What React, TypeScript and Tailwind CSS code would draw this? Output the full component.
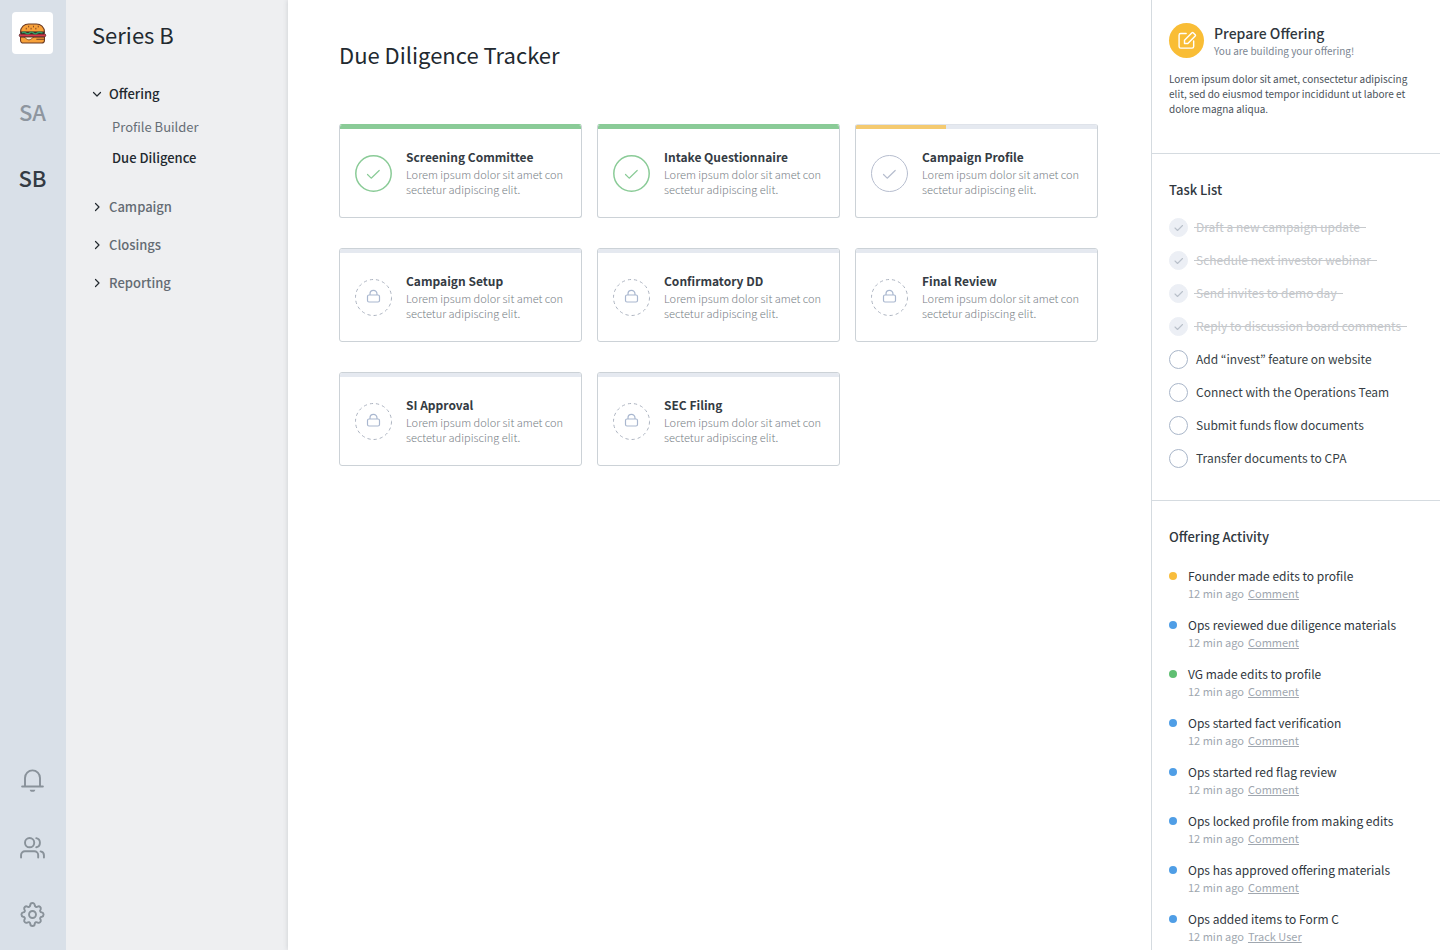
import React from "react";

type CardState = "done" | "active" | "locked";
type Card = { title: string; state: CardState };

const cards: Card[] = [
  { title: "Screening Committee", state: "done" },
  { title: "Intake Questionnaire", state: "done" },
  { title: "Campaign Profile", state: "active" },
  { title: "Campaign Setup", state: "locked" },
  { title: "Confirmatory DD", state: "locked" },
  { title: "Final Review", state: "locked" },
  { title: "SI Approval", state: "locked" },
  { title: "SEC Filing", state: "locked" },
];

const tasks = [
  { label: "Draft a new campaign update", done: true },
  { label: "Schedule next investor webinar", done: true },
  { label: "Send invites to demo day", done: true },
  { label: "Reply to discussion board comments", done: true },
  { label: "Add “invest” feature on website", done: false },
  { label: "Connect with the Operations Team", done: false },
  { label: "Submit funds flow documents", done: false },
  { label: "Transfer documents to CPA", done: false },
];

const activity = [
  { text: "Founder made edits to profile", dot: "bg-[#f8bd3c]", action: "Comment" },
  { text: "Ops reviewed due diligence materials", dot: "bg-[#4f9ee6]", action: "Comment" },
  { text: "VG made edits to profile", dot: "bg-[#5fbf72]", action: "Comment" },
  { text: "Ops started fact verification", dot: "bg-[#4f9ee6]", action: "Comment" },
  { text: "Ops started red flag review", dot: "bg-[#4f9ee6]", action: "Comment" },
  { text: "Ops locked profile from making edits", dot: "bg-[#4f9ee6]", action: "Comment" },
  { text: "Ops has approved offering materials", dot: "bg-[#4f9ee6]", action: "Comment" },
  { text: "Ops added items to Form C", dot: "bg-[#4f9ee6]", action: "Track User" },
];

function Burger() {
  return (
    <svg viewBox="0 0 30 24" className="h-[23px] w-[29px]" aria-hidden="true">
      <path d="M2.500 10.500C2.500 5 6.500 2 11 2h8c4.500 0 8.500 3 8.500 8.500z" fill="#f7a13a" stroke="#6b3a22" strokeWidth="1.100" />
      <path d="M2.500 15.500h25V19c0 1.800-1.200 3-3 3h-19c-1.800 0-3-1.200-3-3z" fill="#f7a13a" stroke="#6b3a22" strokeWidth="1.100" />
      <path d="M6 15.500h10.500c-2 1-3 3.200-5.200 3.200S8 16.500 6 15.500z" fill="#fff3cf" stroke="#6b3a22" strokeWidth=".8" />
      <path d="M19 18h8" stroke="#6b3a22" strokeWidth="1" />
      <rect x="1.200" y="12.400" width="27.600" height="3" rx="1.400" fill="#d9374a" stroke="#5b2a2a" strokeWidth=".9" />
      <rect x="2" y="10.200" width="26" height="2.600" rx="1.200" fill="#39312b" />
      <path d="M4 11.200c1.500-.8 3-.8 4 .3s3 1 4 0 3-1 4 0 3 1 4 0 3-1 5.500-.2" fill="none" stroke="#2f9e62" strokeWidth="1.500" />
      <path d="M8.500 6.500v.9M11 4.300v.9M13.500 6.500v.9M16 4.300v.9M18.500 6.500v.9M21 4.300v.9" stroke="#7a4424" strokeWidth="1" strokeLinecap="round" />
    </svg>
  );
}

function BellIcon() {
  return (
    <svg viewBox="0 0 26 26" className="size-[25px]" fill="none" stroke="currentColor" strokeWidth="2" strokeLinecap="round" aria-hidden="true">
      <path d="M2.200 19.300h21.600M5.200 19.300v-9a7.800 7.800 0 0 1 15.600 0v9" />
      <path d="M10.100 22.500h5.800c-.3 1.500-1.400 2.300-2.900 2.300s-2.600-.8-2.900-2.300z" fill="currentColor" stroke="none" />
    </svg>
  );
}

function UsersIcon() {
  return (
    <svg viewBox="0 0 26 26" className="size-[25px]" fill="none" stroke="currentColor" strokeWidth="2" strokeLinecap="round" strokeLinejoin="round" aria-hidden="true">
      <circle cx="10" cy="8" r="4.800" />
      <path d="M1.100 23.500v-2.600a4 4 0 0 1 4-4h9.800a4 4 0 0 1 4 4v2.600" />
      <path d="M16.900 3.300a4.800 4.800 0 0 1 0 9.400M21.400 17a4 4 0 0 1 3.500 4v2.500" />
    </svg>
  );
}

function GearIcon() {
  return (
    <svg viewBox="0 0 26 26" className="size-[25px]" fill="none" stroke="currentColor" strokeWidth="2" strokeLinejoin="round" aria-hidden="true">
      <circle cx="13" cy="13" r="3.600" />
      <path d="M10.700 3.300a2.300 2.300 0 0 1 4.600 0c.1 1.700 1.900 2.500 3.200 1.400a2.300 2.300 0 0 1 3 3c-1.300 1.300-.4 3.100 1.200 3.100a2.300 2.300 0 0 1 0 4.500c-1.600.1-2.500 1.900-1.200 3.200a2.300 2.300 0 0 1-3 3c-1.300-1.200-3.100-.4-3.200 1.200a2.300 2.300 0 0 1-4.600 0c-.1-1.600-1.900-2.400-3.200-1.200a2.300 2.300 0 0 1-3-3c1.300-1.300.4-3.100-1.200-3.200a2.300 2.300 0 0 1 0-4.500c1.600 0 2.500-1.800 1.200-3.100a2.300 2.300 0 0 1 3-3c1.300 1.100 3.100.3 3.200-1.400z" />
    </svg>
  );
}

function Chevron({ open }: { open?: boolean }) {
  return (
    <svg viewBox="0 0 10 10" className="size-[10px] shrink-0 text-[#22292f]" fill="none" stroke="currentColor" strokeWidth="1.200" strokeLinecap="round" strokeLinejoin="round" aria-hidden="true">
      <path d={open ? "M1.500 3.500 5 7l3.500-3.500" : "M3.500 1.500 7 5 3.500 8.500"} />
    </svg>
  );
}

function StatusIcon({ state }: { state: CardState }) {
  if (state === "locked") {
    return (
      <svg viewBox="0 0 37 37" className="size-[37px] shrink-0" fill="none" aria-hidden="true">
        <circle cx="18.500" cy="18.500" r="18" stroke="#adb4c0" strokeWidth="1" strokeDasharray="3.200 3" />
        <rect x="12.500" y="16" width="12" height="7" rx="1.500" stroke="#a9b7cf" strokeWidth="1.200" />
        <path d="M15 16v-1.100a3.500 3.500 0 0 1 7 0V16" stroke="#a9b7cf" strokeWidth="1.200" />
      </svg>
    );
  }
  const done = state === "done";
  return (
    <svg viewBox="0 0 37 37" className="size-[37px] shrink-0" fill="none" stroke={done ? "#8acb97" : "#b6bdce"} strokeLinecap="round" strokeLinejoin="round" aria-hidden="true">
      <circle cx="18.500" cy="18.500" r={done ? 17.7 : 18} strokeWidth={done ? 1.5 : 1} />
      <path d="m12.500 19.500 3.700 3.700 8-7.700" strokeWidth="1.200" />
    </svg>
  );
}

function TrackerCard({ card }: { card: Card }) {
  return (
    <article
      className={`flex h-[94px] flex-col overflow-hidden rounded-[3px] border border-[#ccd2d7] bg-white ${card.state === "done" ? "border-t-[#8acb97]" : ""} ${card.state === "active" ? "border-t-[#dfe3ea]" : ""}`}
    >
      <div className="h-1 shrink-0 bg-[#e5e9f0]">
        {card.state === "done" && <div className="h-full bg-[#8acb97]" />}
        {card.state === "active" && <div className="h-full w-[37.5%] bg-[#f4ca70] shadow-[0_-1px_0_#f4ca70]" />}
      </div>
      <div className="flex flex-1 gap-[14px] pt-[26px] pl-[15px]">
        <StatusIcon state={card.state} />
        <div>
          <h2 className="-mt-2 text-[12px] leading-5 font-bold text-[#343b43]">{card.title}</h2>
          <p className="text-[11px] leading-[15px] font-light whitespace-nowrap text-[#777e86]">
            Lorem ipsum dolor sit amet con
            <br />
            sectetur adipiscing elit.
          </p>
        </div>
      </div>
    </article>
  );
}

export default function App() {
  return (
    <div className="flex min-h-screen bg-white font-['Noto_Sans_CJK_KR',sans-serif] text-[#30373e]">
      <nav aria-label="Workspaces" className="flex w-[66px] shrink-0 flex-col items-center bg-[#d9e0e8] pt-3 pr-px pb-[23px]">
        <a href="#home" aria-label="Home" className="flex h-[42px] w-[41px] items-center justify-center rounded bg-white">
          <Burger />
        </a>
        <div className="mt-[41px] flex flex-col gap-[34px] text-center text-[22px] leading-8 font-medium">
          <a href="#series-a" className="text-[#8e969f]">SA</a>
          <a href="#series-b" className="text-[#343b43]">SB</a>
        </div>
        <div className="mt-auto flex flex-col gap-[42px] text-[#89929a]">
          <button type="button" aria-label="Notifications"><BellIcon /></button>
          <button type="button" aria-label="Team"><UsersIcon /></button>
          <button type="button" aria-label="Settings"><GearIcon /></button>
        </div>
      </nav>

      <aside className="w-[222px] shrink-0 bg-[#eeeff1] px-[26px] pt-[14px]">
        <h2 className="text-[22px] leading-10 text-[#22292f]">Series B</h2>
        <nav aria-label="Series B" className="mt-[29px] text-[13px] leading-[22px]">
          <button type="button" aria-expanded="true" className="flex items-center gap-[7px] font-medium text-[#22292f]">
            <Chevron open />
            Offering
          </button>
          <div className="mt-[11px] mb-[27px] ml-5 flex flex-col gap-[9px]">
            <a href="#profile" className="text-[#666e76]">Profile Builder</a>
            <a href="#diligence" className="font-medium text-[#22292f]">Due Diligence</a>
          </div>
          <div className="flex flex-col gap-4">
            {["Campaign", "Closings", "Reporting"].map((name) => (
              <button key={name} type="button" aria-expanded="false" className="flex items-center gap-[7px] font-medium text-[#646b73]">
                <Chevron />
                {name}
              </button>
            ))}
          </div>
        </nav>
      </aside>

      <main className="min-w-0 flex-1 pt-[34px] pr-[53px] pl-[51px] shadow-[0_0_5px_rgba(60,70,80,0.2)]">
        <h1 className="text-[22px] leading-10 text-[#22292f]">Due Diligence Tracker</h1>
        <div className="mt-[50px] grid grid-cols-3 gap-x-[15px] gap-y-[30px]">
          {cards.map((card) => (
            <TrackerCard key={card.title} card={card} />
          ))}
        </div>
      </main>

      <aside className="relative w-[289px] shrink-0 border-l border-[#d5dbe0] bg-white">
        <section className="border-b border-[#d5dbe0] px-[17px] pt-[23px] pb-[37px]">
          <div className="flex gap-[10px]">
            <span className="flex size-[35px] items-center justify-center rounded-full bg-[#f9bd35] text-white">
              <svg viewBox="0 0 24 24" className="size-5" fill="none" stroke="currentColor" strokeWidth="1.700" strokeLinecap="round" strokeLinejoin="round" aria-hidden="true">
                <path d="M11 3H4.500A2 2 0 0 0 2.500 5v13.500a2 2 0 0 0 2 2H18a2 2 0 0 0 2-2V12" />
                <path d="M18 2.100a1 1 0 0 1 1.400 0l2.500 2.500a1 1 0 0 1 0 1.400L13 15H9v-4z" />
              </svg>
            </span>
            <div>
              <h2 className="text-[14px] leading-5 font-medium">Prepare Offering</h2>
              <p className="text-[10px] leading-4 text-[#7b8591]">You are building your offering!</p>
            </div>
          </div>
          <p className="mt-3 text-[10px] leading-[15px] whitespace-nowrap text-[#4b525a]">
            Lorem ipsum dolor sit amet, consectetur adipiscing
            <br />
            elit, sed do eiusmod tempor incididunt ut labore et
            <br />
            dolore magna aliqua.
          </p>
        </section>

        <section className="border-b border-[#d5dbe0] px-[17px] pt-[25px] pb-8">
          <h2 className="text-[13px] leading-[22px] font-medium">Task List</h2>
          <ul className="mt-4 flex flex-col gap-[13px]">
            {tasks.map((task, i) => (
              <li key={task.label} className="flex h-5 items-center gap-2 text-[12px] leading-5">
                <span className="grid shrink-0">
                  <input
                    id={`task-${i}`}
                    type="checkbox"
                    defaultChecked={task.done}
                    className="peer col-start-1 row-start-1 size-[19px] appearance-none rounded-full border border-[#a9b6c9] checked:border-[#eceff5] checked:bg-[#eceff5]"
                  />
                  <svg viewBox="0 0 19 19" className="pointer-events-none invisible col-start-1 row-start-1 size-[19px] text-[#b9c0ca] peer-checked:visible" fill="none" stroke="currentColor" strokeWidth="1.100" strokeLinecap="round" strokeLinejoin="round" aria-hidden="true">
                    <path d="m6 10 2.500 2.500L13.500 7.500" />
                  </svg>
                </span>
                <label htmlFor={`task-${i}`} className={task.done ? "relative text-[#c3c6ca]" : "text-[#383f46]"}>
                  {task.label}
                  {task.done && <span className="absolute top-1/2 -right-1.5 -left-0.5 h-px bg-[#c6c9cc]" />}
                </label>
              </li>
            ))}
          </ul>
        </section>

        <section className="px-[17px] pt-[25px]">
          <h2 className="text-[13px] leading-[22px] font-medium">Offering Activity</h2>
          <ul className="mt-[18px] flex flex-col gap-[15px]">
            {activity.map((item) => (
              <li key={item.text} className="flex gap-[11px]">
                <span className={`mt-[6px] size-2 shrink-0 rounded-full ${item.dot}`} />
                <div>
                  <p className="text-[12px] leading-5 text-[#30373e]">{item.text}</p>
                  <p className="flex gap-1 text-[11px] leading-[14px] text-[#a0a7af]">
                    12 min ago
                    <a href="#activity" className="underline">{item.action}</a>
                  </p>
                </div>
              </li>
            ))}
          </ul>
        </section>
      </aside>
    </div>
  );
}
